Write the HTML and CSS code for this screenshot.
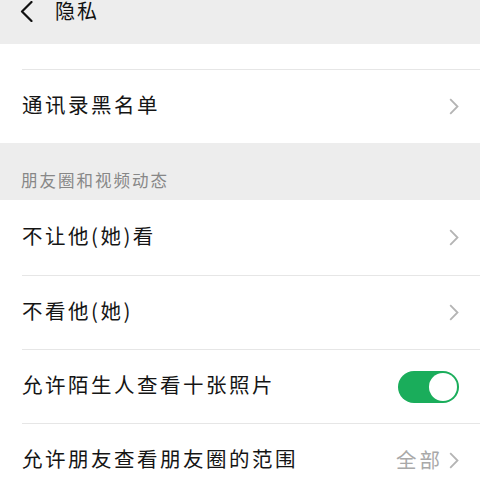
FILE: index.html
```html
<!DOCTYPE html>
<html lang="zh-CN">
<head>
<meta charset="utf-8">
<title>隐私</title>
<link rel="stylesheet" href="styles.css">
</head>
<body>
<div class="page">
  <header class="topbar">
    <svg class="back" width="13" height="21" viewBox="0 0 13 21"><polyline points="11.5,1 2,10.5 11.5,20" fill="none" stroke="#111" stroke-width="2.2" stroke-linecap="round" stroke-linejoin="round"/></svg>
    <span class="title">隐私</span>
  </header>

  <div class="group">
    <div class="spacer-row"></div>
    <div class="row">
      <span class="label">通讯录黑名单</span>
      <span class="right"><svg class="chev" width="10" height="17" viewBox="0 0 10 17"><polyline points="1.2,1.2 8.5,8.5 1.2,15.8" fill="none" stroke="#b4b4b4" stroke-width="1.8"/></svg></span>
    </div>
  </div>

  <div class="section-title">朋友圈和视频动态</div>

  <div class="group">
    <div class="row">
      <span class="label">不让他(她)看</span>
      <span class="right"><svg class="chev" width="10" height="17" viewBox="0 0 10 17"><polyline points="1.2,1.2 8.5,8.5 1.2,15.8" fill="none" stroke="#b4b4b4" stroke-width="1.8"/></svg></span>
    </div>
    <div class="row">
      <span class="label">不看他(她)</span>
      <span class="right"><svg class="chev" width="10" height="17" viewBox="0 0 10 17"><polyline points="1.2,1.2 8.5,8.5 1.2,15.8" fill="none" stroke="#b4b4b4" stroke-width="1.8"/></svg></span>
    </div>
    <div class="row">
      <span class="label">允许陌生人查看十张照片</span>
      <span class="right"><span class="toggle on"><span class="knob"></span></span></span>
    </div>
    <div class="row">
      <span class="label">允许朋友查看朋友圈的范围</span>
      <span class="right"><span class="value">全部</span><svg class="chev" width="10" height="17" viewBox="0 0 10 17"><polyline points="1.2,1.2 8.5,8.5 1.2,15.8" fill="none" stroke="#b4b4b4" stroke-width="1.8"/></svg></span>
    </div>
  </div>
</div>
</body>
</html>
```

FILE: styles.css
```css
* { box-sizing: border-box; }
html, body {
  margin: 0;
  padding: 0;
  background: #ffffff;
}
body {
  font-family: "Noto Sans CJK SC", "Noto Sans", sans-serif;
  color: #161616;
  overflow: hidden;
}
.page {
  width: 480px;
  height: 480px;
  overflow: hidden;
}
.topbar {
  height: 44px;
  background: #ededed;
  display: flex;
  align-items: flex-start;
  padding-left: 20px;
  padding-top: 1px;
  gap: 22px;
}
.back {
  margin-top: 0;
  flex: none;
}
.title {
  font-size: 20px;
  line-height: 20px;
  letter-spacing: 2px;
  color: #111;
}
.group {
  background: #fff;
}
.spacer-row {
  height: 25px;
}
.row {
  height: 74px;
  margin-left: 22px;
  padding-right: 21px;
  border-top: 1px solid #e6e6e6;
  display: flex;
  align-items: center;
  justify-content: space-between;
}
.section-title + .group .row:first-child {
  border-top: none;
  height: 75px;
}
.label {
  font-size: 20.5px;
  letter-spacing: 2.5px;
  line-height: 1;
  color: #151515;
  padding-bottom: 4px;
}
.right {
  display: flex;
  align-items: center;
  gap: 6px;
}
.chev {
  display: block;
  flex: none;
}
.value {
  font-size: 20.5px;
  letter-spacing: 3px;
  color: #a9a9a9;
  line-height: 1;
  padding-bottom: 3px;
}
.section-title {
  height: 57px;
  background: #ededed;
  padding-left: 21px;
  padding-top: 28px;
  font-size: 16.5px;
  line-height: 18px;
  letter-spacing: 2px;
  color: #878787;
}
.toggle {
  position: relative;
  width: 61px;
  height: 32px;
  border-radius: 16px;
  background: #1aad5b;
  display: block;
}
.toggle .knob {
  position: absolute;
  right: 2px;
  top: 2px;
  width: 28px;
  height: 28px;
  border-radius: 50%;
  background: #fff;
}
```
